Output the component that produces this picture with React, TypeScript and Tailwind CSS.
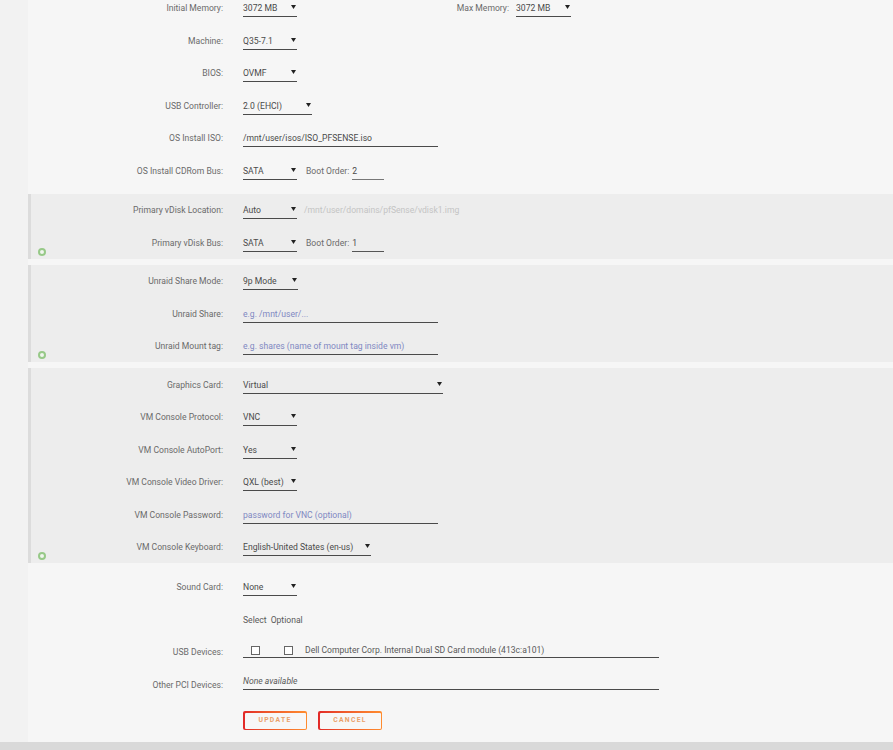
import React from "react";

const font = { fontFamily: "Roboto, 'Liberation Sans', Arial, sans-serif" };

function Arrow() {
  return (
    <svg width="5" height="4" viewBox="0 0 5 4" className="absolute right-[1px] top-[6px]">
      <path d="M0 0 L5 0 L2.5 4 Z" fill="#222" />
    </svg>
  );
}

function Select({ value, w }: { value: string; w: string }) {
  return (
    <div className={`relative h-[18px] border-b border-[#4a4a4a] text-[#4a4a4a] leading-[19px] ${w}`}>
      <span>{value}</span>
      <Arrow />
    </div>
  );
}

function TextInput({ value, w, placeholder }: { value: string; w: string; placeholder?: boolean }) {
  return (
    <div
      className={`h-[18px] border-b border-[#4a4a4a] leading-[19px] ${w} ${
        placeholder ? "text-[#8088c2]" : "text-[#4a4a4a]"
      }`}
    >
      {value}
    </div>
  );
}

function Row({
  label,
  children,
  section,
}: {
  label: string;
  children: React.ReactNode;
  section?: boolean;
}) {
  return (
    <div className="flex h-[18px] items-start">
      <div
        className={`${section ? "w-[192px]" : "w-[195px]"} shrink-0 text-right leading-[19px] text-[#6a6a6a]`}
      >
        {label}
      </div>
      <div className="ml-[20px] flex items-start">{children}</div>
    </div>
  );
}

function Plus() {
  return (
    <div className="absolute bottom-[3px] left-[7px] h-[8px] w-[8px] rounded-full border-[2px] border-[#97c988] bg-[#f0f5ee]" />
  );
}

function Section({ children }: { children: React.ReactNode }) {
  return (
    <div className="relative flex flex-col gap-[14.5px] border-l-[3px] border-[#dcdcdc] bg-[#ededed] pb-[7px] pt-[7.5px]">
      {children}
      <Plus />
    </div>
  );
}

function Button({ label }: { label: string }) {
  return (
    <div className="rounded-[2px] bg-gradient-to-r from-[#e22828] to-[#ff8c2f] p-[1.5px]">
      <div className="flex h-[16px] w-[61px] items-center justify-center rounded-[1px] bg-[#f7f7f7] text-[6.8px] font-bold tracking-[1.3px] text-[#eaa06a]">
        {label}
      </div>
    </div>
  );
}

export default function App() {
  return (
    <div className="flex h-[750px] w-[893px] flex-col overflow-hidden bg-[#f2f2f2] text-[8.6px]" style={font}>
      <div className="ml-[28px] flex flex-1 flex-col bg-[#f6f6f6]">
        <div className="-mt-[1px] flex flex-col gap-[14.5px]">
          <Row label="Initial Memory:">
            <Select value="3072 MB" w="w-[54px]" />
            <div className="w-[212px] text-right leading-[19px] text-[#6a6a6a]">Max Memory:</div>
            <div className="ml-[7px]">
              <Select value="3072 MB" w="w-[55px]" />
            </div>
          </Row>
          <Row label="Machine:">
            <Select value="Q35-7.1" w="w-[54px]" />
          </Row>
          <Row label="BIOS:">
            <Select value="OVMF" w="w-[54px]" />
          </Row>
          <Row label="USB Controller:">
            <Select value="2.0 (EHCI)" w="w-[69px]" />
          </Row>
          <Row label="OS Install ISO:">
            <TextInput value="/mnt/user/isos/ISO_PFSENSE.iso" w="w-[195px]" />
          </Row>
          <Row label="OS Install CDRom Bus:">
            <Select value="SATA" w="w-[54px]" />
            <span className="ml-[9px] leading-[19px] text-[#6a6a6a]">Boot Order:</span>
            <div className="ml-[3px] h-[18px] w-[32px] border-b border-[#777] leading-[19px] text-[#4a4a4a]">2</div>
          </Row>
        </div>

        <div className="mt-[14px] flex flex-col gap-[6px]">
          <Section>
            <Row label="Primary vDisk Location:" section>
              <Select value="Auto" w="w-[54px]" />
              <span className="ml-[7px] leading-[19px] text-[#c4c4c4]">/mnt/user/domains/pfSense/vdisk1.img</span>
            </Row>
            <Row label="Primary vDisk Bus:" section>
              <Select value="SATA" w="w-[54px]" />
              <span className="ml-[9px] leading-[19px] text-[#6a6a6a]">Boot Order:</span>
              <div className="ml-[3px] h-[18px] w-[32px] border-b border-[#555] leading-[19px] text-[#4a4a4a]">1</div>
            </Row>
          </Section>
          <Section>
            <Row label="Unraid Share Mode:" section>
              <Select value="9p Mode" w="w-[55px]" />
            </Row>
            <Row label="Unraid Share:" section>
              <TextInput value="e.g. /mnt/user/..." w="w-[195px]" placeholder />
            </Row>
            <Row label="Unraid Mount tag:" section>
              <TextInput value="e.g. shares (name of mount tag inside vm)" w="w-[195px]" placeholder />
            </Row>
          </Section>
          <Section>
            <Row label="Graphics Card:" section>
              <Select value="Virtual" w="w-[200px]" />
            </Row>
            <Row label="VM Console Protocol:" section>
              <Select value="VNC" w="w-[54px]" />
            </Row>
            <Row label="VM Console AutoPort:" section>
              <Select value="Yes" w="w-[54px]" />
            </Row>
            <Row label="VM Console Video Driver:" section>
              <Select value="QXL (best)" w="w-[54px]" />
            </Row>
            <Row label="VM Console Password:" section>
              <TextInput value="password for VNC (optional)" w="w-[195px]" placeholder />
            </Row>
            <Row label="VM Console Keyboard:" section>
              <Select value="English-United States (en-us)" w="w-[128px]" />
            </Row>
          </Section>
        </div>

        <div className="mt-[15px] flex flex-col">
          <Row label="Sound Card:">
            <Select value="None" w="w-[54px]" />
          </Row>
          <div className="mt-[14.5px]">
            <Row label="">
              <div className="flex gap-[4px] leading-[19px] text-[#5a5a5a]">
                <span>Select</span>
                <span>Optional</span>
              </div>
            </Row>
          </div>
          <div className="mt-[14.5px] flex h-[18px] items-start">
            <div className="w-[195px] shrink-0 text-right leading-[19px] text-[#6a6a6a]">USB Devices:</div>
            <div className="ml-[20px] flex h-[15px] w-[416px] items-center border-b border-[#4a4a4a] text-[#5a5a5a]">
              <div className="ml-[8px] h-[9px] w-[9px] border border-[#666] bg-white" />
              <div className="ml-[24px] h-[9px] w-[9px] border border-[#666] bg-white" />
              <span className="ml-[12px]">Dell Computer Corp. Internal Dual SD Card module (413c:a101)</span>
            </div>
          </div>
          <div className="mt-[15px] flex h-[18px] items-start">
            <div className="w-[195px] shrink-0 text-right leading-[19px] text-[#6a6a6a]">Other PCI Devices:</div>
            <div className="-mt-[4px] ml-[20px] h-[18px] w-[416px] border-b border-[#4a4a4a] italic leading-[19px] text-[#5a5a5a]">
              None available
            </div>
          </div>
          <div className="ml-[215px] mt-[17px] flex gap-[11px]">
            <Button label="UPDATE" />
            <Button label="CANCEL" />
          </div>
        </div>
      </div>
      <div className="h-[8px] shrink-0 bg-[#d9d9d9]" />
    </div>
  );
}
